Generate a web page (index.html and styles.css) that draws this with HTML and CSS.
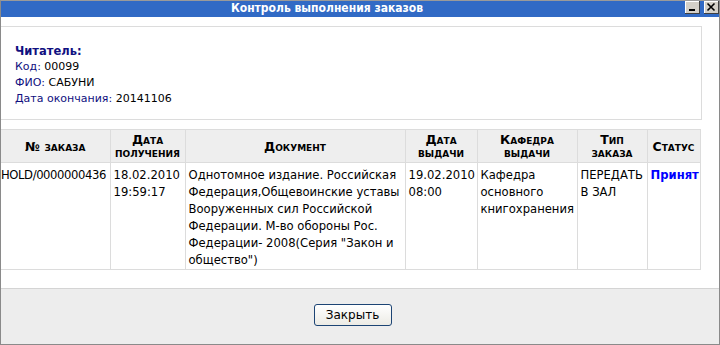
FILE: index.html
```html
<!DOCTYPE html>
<html>
<head>
	<title>Контроль выполнения заказов</title>
	<link rel="stylesheet" href="styles.css">
</head>
<body>
	<div class="window">
		<div class="titlebar">
			<div class="title">Контроль выполнения заказов</div>
			<div class="title-buttons">
				<span class="tbtn">
					<svg width="15" height="13" viewBox="0 0 15 13"><rect x="4" y="8" width="6" height="2" fill="#000"/></svg>
				</span>
				<span class="tbtn">
					<svg width="15" height="13" viewBox="0 0 15 13"><path d="M3.5 2.5 L10.5 9.5 M10.5 2.5 L3.5 9.5" stroke="#000" stroke-width="1.6"/></svg>
				</span>
			</div>
		</div>

		<div class="content">
			<div class="reader">
				<div class="reader-title">Читатель:</div>
				<div><span class="lbl">Код:</span> 00099</div>
				<div><span class="lbl">ФИО:</span> САБУНИ</div>
				<div><span class="lbl">Дата окончания:</span> 20141106</div>
			</div>

			<table class="orders">
				<colgroup>
					<col class="c1">
					<col class="c2">
					<col class="c3">
					<col class="c4">
					<col class="c5">
					<col class="c6">
					<col class="c7">
				</colgroup>
				<thead>
					<tr>
						<th>№ заказа</th>
						<th>Дата получения</th>
						<th>Документ</th>
						<th>Дата выдачи</th>
						<th>Кафедра выдачи</th>
						<th>Тип заказа</th>
						<th>Статус</th>
					</tr>
				</thead>
				<tbody>
					<tr>
						<td class="num">HOLD/0000000436</td>
						<td>18.02.2010 19:59:17</td>
						<td>Однотомное издание. Российская Федерация,Общевоинские уставы Вооруженных сил Российской Федерации. М-во обороны Рос. Федерации- 2008(Серия "Закон и общество")</td>
						<td>19.02.2010 08:00</td>
						<td>Кафедра основного книгохранения</td>
						<td>ПЕРЕДАТЬ В ЗАЛ</td>
						<td class="status">Принят</td>
					</tr>
				</tbody>
			</table>
		</div>

		<div class="footer">
			<button class="close-btn">Закрыть</button>
		</div>
	</div>
</body>
</html>
```

FILE: styles.css
```css
body {
	margin: 0;
	font-family: "DejaVu Sans", Verdana, sans-serif;
	font-size: 11px;
	color: #000;
	background: #fff;
}

.window {
	width: 720px;
	height: 345px;
	box-sizing: border-box;
	border: 1px solid #8a8a8a;
	border-top: 1px solid #9a9a9a;
	display: flex;
	flex-direction: column;
}

.titlebar {
	height: 16px;
	background-color: #316ac5;
	display: flex;
	align-items: flex-start;
}

.title {
	flex: 1;
	text-align: center;
	color: #fff;
	font-family: "DejaVu Sans Condensed", "DejaVu Sans", sans-serif;
	font-stretch: condensed;
	font-weight: bold;
	font-size: 12px;
	line-height: 15px;
	padding-right: 32px;
}

.title-buttons {
	display: flex;
	gap: 4px;
}

.tbtn {
	display: block;
	width: 15px;
	height: 13px;
	background: #d4d0c8;
	box-shadow: inset -1px -1px 0 #404040, inset 1px 1px 0 #fff;
}

.tbtn svg {
	display: block;
}

.content {
	flex: 1;
	padding: 9px 17px 0 0;
}

.reader {
	border: 1px solid #dcdcdc;
	border-left: none;
	height: 94px;
	padding: 16px 0 0 14px;
	box-sizing: border-box;
	line-height: 16px;
	font-size: 11px;
}

.reader-title {
	color: #101080;
	font-weight: bold;
	font-size: 11.5px;
}

.lbl {
	color: #101080;
}

.orders {
	margin-top: 9px;
	width: 699px;
	border-collapse: collapse;
	table-layout: fixed;
}

.c1 { width: 109px; }
.c2 { width: 75px; }
.c3 { width: 220px; }
.c4 { width: 72px; }
.c5 { width: 100px; }
.c6 { width: 70px; }
.c7 { width: 53px; }

.orders th,
.orders td {
	border: 1px solid #dcdcdc;
	vertical-align: top;
}

.orders tr > :first-child {
	border-left: none;
}

.orders th {
	background-color: #eeeeee;
	font-variant: small-caps;
	font-weight: bold;
	font-size: 12.5px;
	line-height: 13px;
	height: 32px;
	padding: 0 1px;
	vertical-align: middle;
}

.orders td {
	font-size: 11.6px;
	line-height: 17px;
	padding: 4px 1px 0 3px;
	height: 96px;
}

.orders td.num {
	padding-left: 0;
	letter-spacing: -0.4px;
}

.status {
	color: #0000ff;
	font-weight: bold;
}

.footer {
	height: 55px;
	background-color: #ededed;
	border-top: 1px solid #d4d4d4;
	display: flex;
	justify-content: center;
	align-items: flex-start;
}

.close-btn {
	margin-top: 15px;
	margin-right: 15px;
	width: 78px;
	height: 22px;
	font-family: "DejaVu Sans", Verdana, sans-serif;
	font-size: 12px;
	border: 1px solid #1c4474;
	border-radius: 3px;
	background: linear-gradient(#ffffff, #ecebe5);
	padding: 0;
	cursor: pointer;
}
```
